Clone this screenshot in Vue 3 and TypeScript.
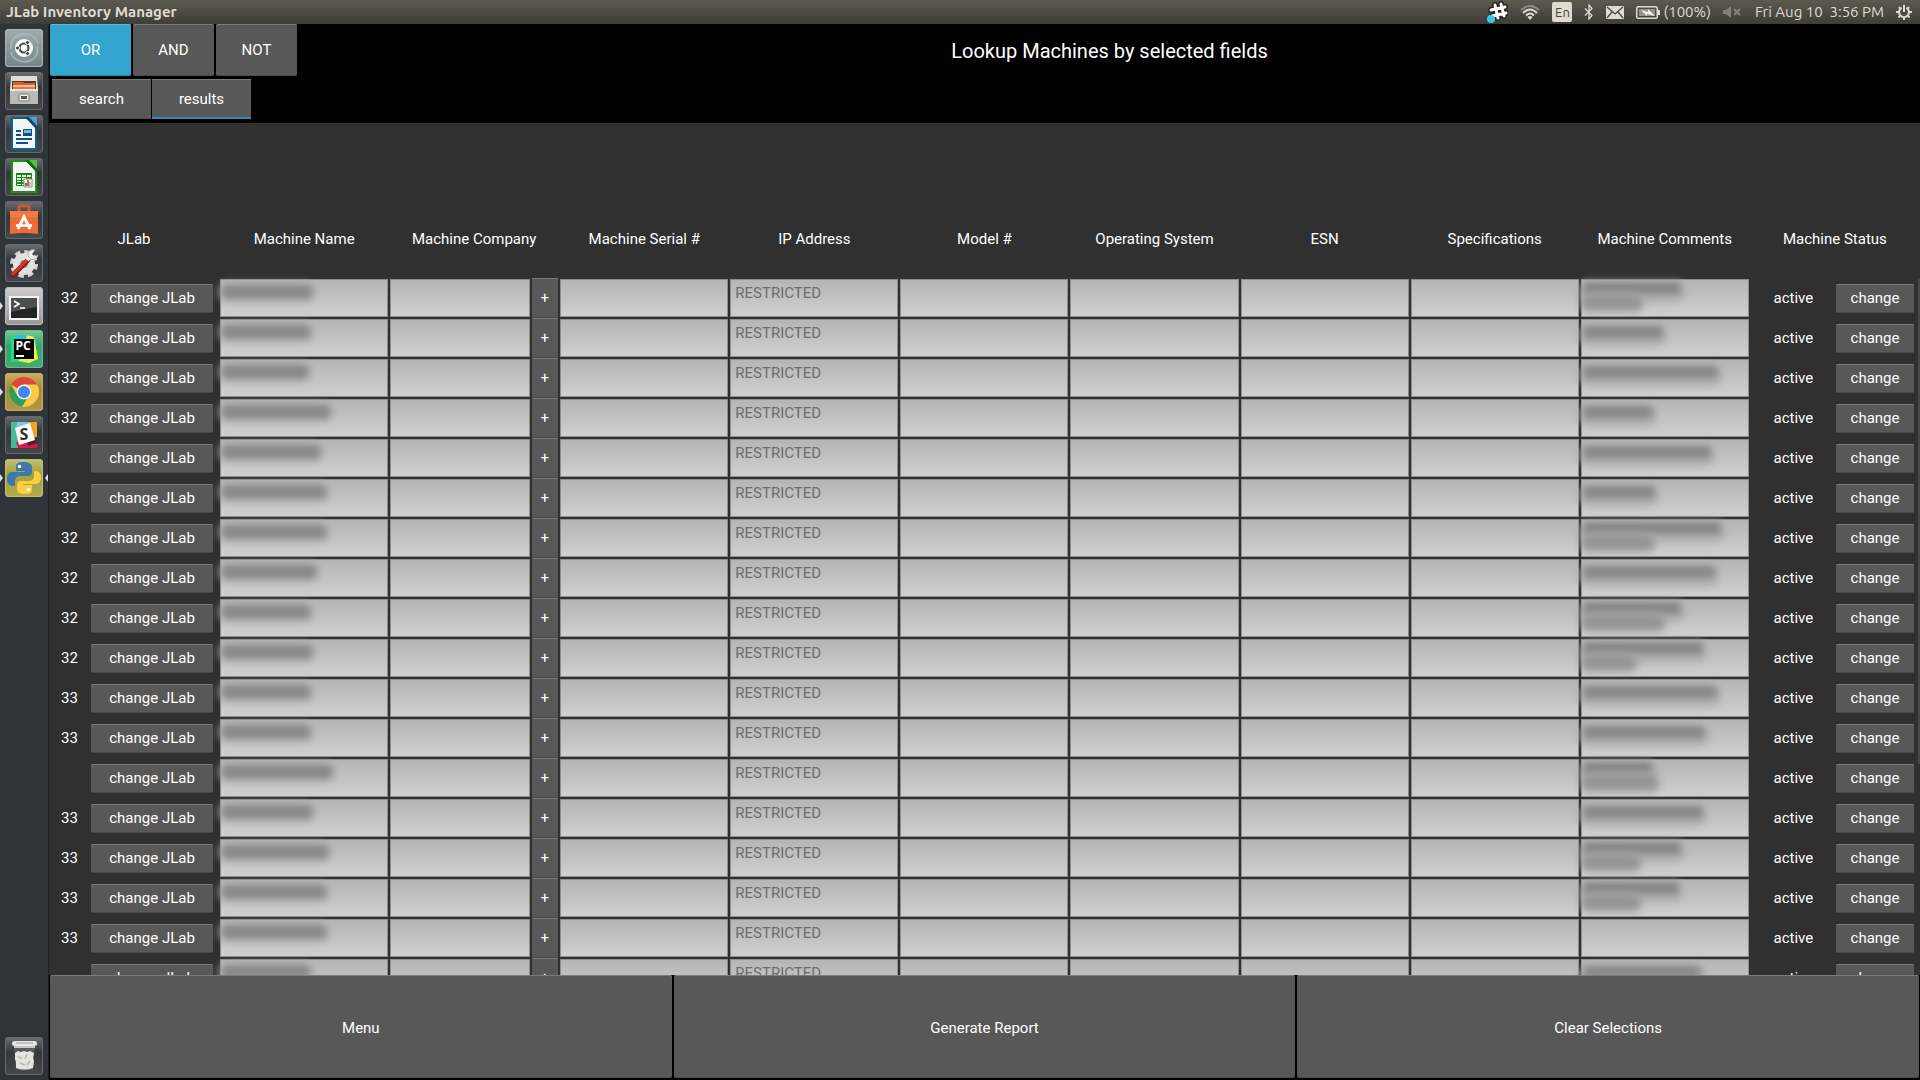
<script setup lang="ts">
import { reactive, ref } from 'vue'

interface Machine {
  lab: string
  ip: string
  nameWidth: number
  commentWidths: number[]
}

const mode = ref('OR')
const modes = ['OR', 'AND', 'NOT']
const tab = ref('results')
const tabs = ['search', 'results']
const footerActions = ['Menu', 'Generate Report', 'Clear Selections']

const headings = [
  'JLab', 'Machine Name', 'Machine Company', 'Machine Serial #', 'IP Address', 'Model #',
  'Operating System', 'ESN', 'Specifications', 'Machine Comments', 'Machine Status',
]
const plainFields = ['Model #', 'Operating System', 'ESN', 'Specifications']

// lab number, width of the obscured name, widths of the obscured comment lines
const source: [string, number, number[]][] = [
  ['32', 90, [98, 58]],
  ['32', 88, [80]],
  ['32', 86, [135]],
  ['32', 108, [70]],
  ['', 98, [128]],
  ['32', 104, [72]],
  ['32', 104, [138, 70]],
  ['32', 94, [132]],
  ['32', 88, [98, 80]],
  ['32', 90, [120, 52]],
  ['33', 88, [134]],
  ['33', 88, [122]],
  ['', 110, [70, 74]],
  ['33', 90, [120]],
  ['33', 106, [98, 56]],
  ['33', 104, [96, 56]],
  ['33', 104, []],
  ['', 88, [118]],
]
const machines = reactive<Machine[]>(
  source.map(([lab, nameWidth, commentWidths]) => ({ lab, ip: 'RESTRICTED', nameWidth, commentWidths })),
)
</script>

<template>
  <div class="desktop">
    <header class="panel">
      <span class="panel-title">JLab Inventory Manager</span>
      <div class="indicators">
        <svg width="22" height="22" viewBox="0 0 22 22">
          <g fill="none" stroke-linecap="round">
            <path d="M9 4l3 13M15 3l3 12M5 9l14-3M6 15l14-3" stroke="#24231f" stroke-width="6" />
            <path d="M9 4l3 13M15 3l3 12M5 9l14-3M6 15l14-3" stroke="#fff" stroke-width="3" />
          </g>
          <circle cx="5" cy="18" r="4" fill="#3fc4ee" />
        </svg>
        <svg width="20" height="16" viewBox="0 0 20 16" fill="none" stroke-width="2">
          <path d="M1 6Q10-2 19 6" stroke="#8d8b84" />
          <path d="M3 9Q10 2 17 9M6 11.500Q10 7.500 14 11.500" stroke="#dfdbd2" />
          <path d="M7.500 13Q10 11 12.500 13L10 16z" fill="#dfdbd2" stroke="none" />
        </svg>
        <span class="keyboard">En</span>
        <svg width="10" height="16" viewBox="0 0 10 16" fill="none" stroke="#dfdbd2" stroke-width="1.300">
          <path d="M1 4.500l7 7L5 15V1l3 3.500-7 7" />
        </svg>
        <svg width="18" height="13" viewBox="0 0 18 13">
          <rect width="18" height="13" rx="1" fill="#dfdbd2" />
          <path d="M1 1l8 7 8-7M1 12l5-6M17 12l-5-6" fill="none" stroke="#4a4842" stroke-width="1.300" />
        </svg>
        <span class="battery">
          <svg width="24" height="13" viewBox="0 0 24 13">
            <rect x=".75" y=".75" width="20.500" height="11.500" rx="1.500" fill="none" stroke="#dfdbd2" stroke-width="1.500" />
            <rect x="3" y="3" width="16" height="7" fill="#96938c" />
            <path d="M22 4h2v5h-2z" fill="#dfdbd2" />
            <path d="M5 4l7 2V3l7 7-8-2v2z" fill="#f4f1ea" />
          </svg>
          (100%)
        </span>
        <svg width="20" height="12" viewBox="0 0 20 12" fill="#85827b">
          <path d="M0 4h3l5-4v12L3 8H0z" />
          <path d="M11 3l6 6M17 3l-6 6" stroke="#85827b" stroke-width="2" />
        </svg>
        <span class="clock">Fri Aug 10&nbsp; 3:56 PM</span>
        <svg width="16" height="16" viewBox="0 0 16 16" fill="none" stroke="#dfdbd2">
          <path d="M5.500 3.800a5 5 0 1 0 5 0" stroke-width="2" />
          <path d="M8 1v7" stroke-width="2" />
          <path d="M3 3l1.500 1.500M13 3l-1.500 1.500M0 8h3M13 8h3M2.500 13.500L4 12M13.500 13.500L12 12M8 13v3" stroke-width="2" />
        </svg>
      </div>
    </header>

    <div class="workspace">
      <nav class="launcher" aria-label="Launcher">
        <button class="tile dash" aria-label="Dash">
          <svg viewBox="0 0 38 38">
            <path d="M6 20C5 9 14 3 23 6M32 18c2 11-7 17-16 14M11 8c8-5 19-3 22 6M27 30c-8 5-19 2-21-7" fill="none" stroke="#b9c2c5" stroke-width="2" opacity=".6" />
            <circle cx="19" cy="19" r="9" fill="#fff" />
            <circle cx="19" cy="19" r="4.500" fill="none" stroke="#3d474b" stroke-width="2.200" />
            <g fill="#3d474b" stroke="#fff"><circle cx="12.500" cy="19" r="2" /><circle cx="22.500" cy="13.500" r="2" /><circle cx="22.500" cy="24.500" r="2" /></g>
          </svg>
        </button>
        <button class="tile" aria-label="Files">
          <svg viewBox="0 0 38 38">
            <path d="M6 4h26l1 13H5z" fill="#dcdcda" />
            <path d="M7 9h24v8H7z" fill="#5b3a29" />
            <path d="M8 10h10l1 1h11v2H8z" fill="#d2622c" />
            <path d="M8 13h22v3H8z" fill="#f6b98a" />
            <path d="M8 15h22v2H8z" fill="#e07a3e" />
            <path d="M5 17h28v15H5z" fill="#b9b9b6" />
            <path d="M5 17h28v2H5z" fill="#e6e6e4" />
            <rect x="14" y="22" width="10" height="7" rx="1.500" fill="#ececea" stroke="#777" />
            <path d="M16 24h6v3h-6z" fill="#555" />
          </svg>
        </button>
        <button class="tile" aria-label="LibreOffice Writer">
          <svg viewBox="0 0 38 38">
            <path d="M7 3h15l9 9v22H7z" fill="#f5f5f5" stroke="#0c5f93" stroke-width="2" />
            <path d="M23 2h9v9z" fill="#4f9fcd" />
            <path d="M20 2l12 13v-4L24 2z" fill="#0d4c78" />
            <path d="M11 15h5v2h-5zM11 19h5v2h-5zM11 23h16v2H11zM11 27h12v2H11z" fill="#0b5183" />
            <path d="M18 14h9v7h-9z" fill="#0b5183" />
            <path d="M19 15h7v3h-7z" fill="#7ab5dc" />
          </svg>
        </button>
        <button class="tile" aria-label="LibreOffice Calc">
          <svg viewBox="0 0 38 38">
            <path d="M7 3h15l9 9v22H7z" fill="#f5f5f5" stroke="#1c9410" stroke-width="2" />
            <path d="M23 2h9v9z" fill="#58c041" />
            <path d="M20 2l12 13v-4L24 2z" fill="#146c0b" />
            <path d="M11 15h16v13H11z" fill="#178a0d" />
            <path d="M12 17h4v2h-4zM17 17h4v2h-4zM22 17h4v2h-4zM12 20h4v2h-4zM17 20h4v2h-4zM12 23h4v1h-4zM17 23h3v1h-3zM12 26h4v1h-4zM17 26h3v1h-3z" fill="#e9f7e6" />
            <path d="M19 21h8v8h-8z" fill="#fff" stroke="#888" />
            <path d="M20 25h2v3h-2z" fill="#3888cc" /><path d="M22 22h2v6h-2z" fill="#e06030" /><path d="M24 24h2v4h-2z" fill="#d8b8a0" />
          </svg>
        </button>
        <button class="tile" aria-label="Ubuntu Software">
          <svg viewBox="0 0 38 38">
            <path d="M14 13V6q0-1 1-1h8q1 0 1 1v7" fill="none" stroke="#c9583b" stroke-width="3" />
            <path d="M5 10h28v23q-14-2-28 0z" fill="#ee6c35" />
            <path d="M5 10h28v6H5z" fill="#f58a55" opacity=".5" />
            <path d="M13 28l6-12 6 12" fill="none" stroke="#fff" stroke-width="3" />
            <path d="M11 24.500h16" stroke="#fff" stroke-width="2.500" />
          </svg>
        </button>
        <button class="tile" aria-label="System Settings">
          <svg viewBox="0 0 38 38">
            <circle cx="19" cy="20" r="12" fill="none" stroke="#d4d4d2" stroke-width="4" stroke-dasharray="5.400 4.025" />
            <circle cx="19" cy="20" r="11" fill="#e2e2e0" />
            <circle cx="19" cy="20" r="4" fill="#8b8d8e" />
            <path d="M8 31l15-15" stroke="#8d1613" stroke-width="5" stroke-linecap="round" />
            <path d="M8 30l14-14" stroke="#d33a2e" stroke-width="3" stroke-linecap="round" />
            <path d="M22 16l4-4" stroke="#efefed" stroke-width="4" />
            <path d="M30 6a5 5 0 1 0 3 5l-4 1-2-2z" fill="#f1f1ef" stroke="#999" stroke-width=".7" />
          </svg>
        </button>
        <button class="tile running terminal" aria-label="Terminal">
          <svg viewBox="0 0 38 38">
            <path d="M4 9h30v24H4z" fill="#f2f2f1" />
            <path d="M6 11h26v20H6z" fill="#202425" />
            <path d="M6 11h26v9L6 25z" fill="#4b4f50" />
            <path d="M9 14l5 3-5 3M15 21h5" fill="none" stroke="#fff" stroke-width="1.700" />
          </svg>
        </button>
        <button class="tile running pycharm" aria-label="PyCharm">
          <svg viewBox="0 0 38 38">
            <path d="M6 6h10l4 26H6z" fill="#25d789" />
            <path d="M12 5h14l6 10-20 14z" fill="#1fc5e4" />
            <path d="M22 5l7 2 4 22-9 4-10-2z" fill="#f2ee3d" />
            <path d="M9 9h20v20H9z" fill="#050505" />
            <text x="10.500" y="20" class="glyph" fill="#fff" font-size="12">PC</text>
            <path d="M11 25h8v2h-8z" fill="#fff" />
          </svg>
        </button>
        <button class="tile running chrome" aria-label="Google Chrome">
          <svg viewBox="0 0 38 38">
            <circle cx="19" cy="19" r="15" fill="#fcca3e" />
            <path d="M19 19L6 11.500A15 15 0 0 1 32 11.500H19z" fill="#e0473a" />
            <path d="M6 11.500a15 15 0 0 0 11 22.300l7.500-12L19 19l-6.500 3.700z" fill="#2e9e58" />
            <circle cx="19" cy="19" r="7.500" fill="#f4f4f4" />
            <circle cx="19" cy="19" r="6" fill="#4285f4" />
          </svg>
        </button>
        <button class="tile" aria-label="Slack">
          <svg viewBox="0 0 38 38">
            <path d="M6 6h17l-6 26H6z" fill="#4cb79a" />
            <path d="M12 6l12 0-3 9-10 2z" fill="#78cbe0" />
            <path d="M23 6h9v18l-10 0z" fill="#e9a820" />
            <path d="M11 26l21-5v11H13z" fill="#d8174e" />
            <path d="M22 24l10-3v6l-9 3z" fill="#5a1630" />
            <path d="M10 12l15-5 5 17-16 5z" fill="#fff" />
            <text x="14.500" y="24" class="glyph" fill="#2b2b2b" font-size="16">S</text>
          </svg>
        </button>
        <button class="tile running focused python" aria-label="Python">
          <svg viewBox="0 0 38 38">
            <path d="M18 3c-6 0-7 2-7 5v4h9v1H7c-4 0-5 4-5 7s2 7 5 7h3v-5c0-3 2-5 5-5h8c3 0 4-2 4-4V8c0-3-3-5-9-5z" fill="#3d79ad" />
            <path d="M20 35c6 0 7-2 7-5v-4h-9v-1h13c4 0 5-4 5-7s-2-6-5-6h-2v5c0 3-2 5-5 5h-8c-3 0-4 2-4 4v4c0 3 2 5 8 5z" fill="#fdcf3c" />
            <circle cx="14.500" cy="7.500" r="1.700" fill="#fff" /><circle cx="23.500" cy="30.500" r="1.700" fill="#fff" />
          </svg>
        </button>
        <button class="tile trash" aria-label="Trash">
          <svg viewBox="0 0 38 38">
            <path d="M9 8h21l-2 24q-8.500 3-17 0z" fill="#6f7777" opacity=".5" />
            <path d="M10 16l3-2 3 1 3-1 3 1 3-1 4 2-1 5 1 3-1 7q-8.500 3-17 0l0-6-1-3z" fill="#e3e4df" />
            <path d="M13 19l4 3M22 17l-2 5M15 26l5 2M25 24l-3 4" stroke="#b5b7b1" stroke-width="1.500" />
            <rect x="7" y="4" width="25" height="5" rx="2.500" fill="#e4e6e4" />
            <path d="M9 10h21" stroke="#c5c9c7" stroke-width="2" />
            <path d="M11 6h17" stroke="#9aa09e" />
          </svg>
        </button>
      </nav>

      <main class="app">
        <div class="toolbar">
          <button v-for="m in modes" :key="m" class="btn mode" :class="{ chosen: m === mode }" @click="mode = m">{{ m }}</button>
          <h1>Lookup Machines by selected fields</h1>
        </div>
        <div class="tabs">
          <button v-for="t in tabs" :key="t" class="btn tab" :class="{ current: t === tab }" @click="tab = t">{{ t }}</button>
        </div>

        <section class="results">
          <table>
            <thead>
              <tr><th v-for="h in headings" :key="h" scope="col">{{ h }}</th></tr>
            </thead>
            <tbody>
              <tr v-for="(m, i) in machines" :key="i">
                <td>
                  <div class="lab"><span>{{ m.lab }}</span><button class="btn small">change JLab</button></div>
                </td>
                <td>
                  <div class="cell">
                    <input type="text" aria-label="Machine Name">
                    <i class="smudge" :style="{ width: m.nameWidth + 'px' }"></i>
                  </div>
                </td>
                <td>
                  <div class="company"><input type="text" aria-label="Machine Company"><button class="btn plus">+</button></div>
                </td>
                <td><input type="text" aria-label="Machine Serial #"></td>
                <td><input v-model="m.ip" type="text" aria-label="IP Address"></td>
                <td v-for="f in plainFields" :key="f"><input type="text" :aria-label="f"></td>
                <td>
                  <div class="cell">
                    <input type="text" aria-label="Machine Comments">
                    <i
                      v-for="(w, n) in m.commentWidths" :key="n" class="smudge comment"
                      :class="m.commentWidths.length > 1 ? ['upper', 'lower'][n] : ''" :style="{ width: w + 'px' }"
                    ></i>
                  </div>
                </td>
                <td>
                  <div class="status"><span>active</span><button class="btn small">change</button></div>
                </td>
              </tr>
            </tbody>
          </table>
          <div class="scrollbar"></div>
        </section>

        <footer class="actions">
          <button v-for="a in footerActions" :key="a" class="btn">{{ a }}</button>
        </footer>
      </main>
    </div>
  </div>
</template>

<style>
body {
  margin: 0;
  background: #000;
}
</style>

<style scoped>
.desktop {
  display: flex;
  flex-direction: column;
  height: 100vh;
  overflow: hidden;
  font: 15px/20px Roboto, sans-serif;
  color: #fff;
}
.panel {
  display: flex;
  justify-content: space-between;
  align-items: center;
  flex: none;
  height: 24px;
  box-sizing: border-box;
  padding: 0 8px 0 6px;
  background: linear-gradient(#5c594f, #3f3d38);
  color: #dfdbd2;
  font: 15px/20px Ubuntu, "Noto Sans", sans-serif;
}
.panel-title {
  font-weight: 700;
}
.indicators,
.battery {
  display: flex;
  align-items: center;
  gap: 12px;
}
.battery {
  gap: 3px;
}
.keyboard {
  width: 20px;
  border-radius: 2px;
  background: #dfdbd2;
  color: #45433d;
  font-size: 13px;
  text-align: center;
}
.workspace {
  display: flex;
  flex: 1;
  min-height: 0;
}
.launcher {
  display: flex;
  flex-direction: column;
  gap: 5px;
  flex: none;
  width: 49px;
  box-sizing: border-box;
  padding: 5px;
  border-right: 1px solid #1d2122;
  background: #2e3437;
}
.tile {
  position: relative;
  width: 38px;
  height: 38px;
  padding: 0;
  border: 0;
  border-radius: 4px;
  background: linear-gradient(#6d7072, #33383a 40%, #46494b);
  box-shadow: inset 0 0 0 1px #65696b;
}
.tile svg {
  display: block;
  width: 38px;
  height: 38px;
}
.glyph {
  font-family: "Open Sans", sans-serif;
  font-weight: 700;
}
.dash {
  background: linear-gradient(#a0abae, #77858a);
  box-shadow: inset 0 0 0 1px #a9b3b6;
}
.terminal {
  background: linear-gradient(#cfcccd, #989697);
  box-shadow: inset 0 0 0 1px #bbb;
}
.pycharm {
  background: linear-gradient(#7cc998, #36a568 40%, #43ab72);
  box-shadow: inset 0 0 0 1px #6cbd8b;
}
.chrome {
  background: linear-gradient(#c9b26c, #a78a34 40%, #b1984c);
  box-shadow: inset 0 0 0 1px #c3ad68;
}
.python {
  background: linear-gradient(#c5c27a, #a3a03e 40%, #b0ad50);
  box-shadow: inset 0 0 0 1px #c1bd72;
}
.running::before,
.focused::after {
  content: "";
  position: absolute;
  top: 15px;
  left: -5px;
  border: 4px solid transparent;
  border-left: 3px solid #dedede;
  border-right: 0;
}
.focused::after {
  right: -5px;
  left: auto;
  border-right: 3px solid #dedede;
  border-left: 0;
}
.trash {
  margin-top: auto;
}
.app {
  display: flex;
  flex-direction: column;
  flex: 1;
  min-width: 0;
  background: #000;
}
.btn {
  padding: 0;
  border: 0;
  border-radius: 2px;
  background: #585858;
  box-shadow: inset 0 1px #7b7b7b, inset 0 -1px #4a4a4a;
  color: #fff;
  font: inherit;
}
.toolbar {
  display: flex;
  align-items: center;
  gap: 2px;
  padding: 0 0 3px 1px;
}
.mode {
  width: 81px;
  height: 52px;
}
.chosen {
  background: #32a4ce;
  box-shadow: inset 0 1px #5cb9dc, inset 0 -1px #2887ab;
}
h1 {
  flex: 1;
  margin: 0;
  padding-top: 2px;
  font-size: 20px;
  font-weight: 400;
  line-height: 24px;
  text-align: center;
}
.tabs {
  display: flex;
  gap: 1px;
  padding: 0 3px 4px;
}
.tab {
  width: 99px;
  height: 40px;
  border-radius: 0;
}
.current {
  box-shadow: inset 0 1px #7b7b7b, inset 0 -2px #2b8fb5;
}
.results {
  position: relative;
  flex: 1;
  min-height: 0;
  overflow: hidden;
  background: #303030;
}
table {
  width: 100%;
  table-layout: fixed;
  border-collapse: collapse;
}
th {
  height: 155px;
  box-sizing: border-box;
  padding: 77px 0 0;
  font-weight: 400;
}
td {
  height: 40px;
  box-sizing: border-box;
  padding: 0 1px;
}
input {
  display: block;
  width: 100%;
  height: 38px;
  box-sizing: border-box;
  padding: 0 4px 10px;
  border: 1px solid #8e8e8e;
  border-radius: 0;
  outline: 0;
  background: linear-gradient(#b5b5b5, #cfcfcf);
  color: #6e6e6e;
  font: inherit;
}
.cell {
  position: relative;
}
.smudge {
  position: absolute;
  top: 7px;
  left: 2px;
  height: 12px;
  border-radius: 6px;
  background: #7c7c7c;
  box-shadow: 0 0 2px 4px #a2a2a2;
  filter: blur(3px);
  opacity: .8;
}
.comment {
  box-shadow: 0 3px 3px 5px #a8a8a8;
}
.upper {
  top: 3px;
}
.lower {
  top: 18px;
  background: #8c8c8c;
  box-shadow: 0 0 3px 4px #a2a2a2;
}
.company {
  display: flex;
  align-items: center;
  gap: 2px;
}
.company input {
  flex: 1;
  min-width: 0;
}
.plus {
  width: 26px;
  height: 40px;
  padding: 0 1px 1px 0;
  border-radius: 0;
}
.lab,
.status {
  display: flex;
  align-items: center;
  padding-right: 5px;
  text-align: center;
}
.lab span {
  width: 39px;
  margin-right: 2px;
}
.lab button,
.status span {
  flex: 1;
}
.status button {
  width: 78px;
}
.small {
  height: 29px;
  padding-bottom: 1px;
}
.scrollbar {
  position: absolute;
  top: 155px;
  right: 0;
  width: 2px;
  height: 57%;
  background: #484848;
}
.actions {
  display: flex;
  gap: 2px;
  flex: none;
  padding: 0 1px 2px;
}
.actions button {
  flex: 1;
  height: 103px;
  padding-top: 2px;
}
</style>
